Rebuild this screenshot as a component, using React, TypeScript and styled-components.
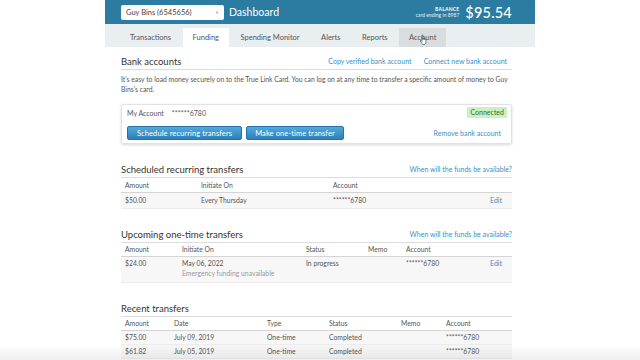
import React from "react";
import styled, { createGlobalStyle } from "styled-components";

const Global = createGlobalStyle`
  html, body { margin: 0; padding: 0; background: #ffffff; }
  body { font-family: Lato, "Open Sans", sans-serif; color: #444; }
  * { box-sizing: border-box; }
`;

const Page = styled.div`
  width: 430px;
  margin: 0 auto;
  background: #fff;
  min-height: 360px;
`;

const Header = styled.header`
  height: 24px;
  background: #2b7ca0;
  display: flex;
  align-items: center;
  padding: 0 23px 0 16px;
`;

const Select = styled.div`
  width: 103px;
  height: 15px;
  background: #fff;
  border-radius: 2px;
  display: flex;
  align-items: center;
  justify-content: space-between;
  padding: 0 5px 0 5px;
  font-size: 7.5px;
  color: #444;
`;

const Caret = styled.span`
  font-size: 4px;
  color: #999;
`;

const Title = styled.h1`
  margin: 0 0 0 5px;
  font-size: 10.5px;
  font-weight: 400;
  color: #fff;
  flex: 1;
`;

const Balance = styled.div`
  display: flex;
  align-items: center;
  gap: 6px;
  color: #fff;
`;

const BalanceLabel = styled.div`
  display: flex;
  flex-direction: column;
  align-items: flex-end;
  line-height: 6px;
`;

const BalanceTitle = styled.span`
  font-size: 5px;
  font-weight: 700;
  letter-spacing: 0.2px;
`;

const BalanceSub = styled.span`
  font-size: 5px;
  opacity: 0.9;
`;

const Amount = styled.span`
  font-size: 14.5px;
  font-weight: 500;
  letter-spacing: 0.2px;
`;

const TabBar = styled.nav`
  height: 23px;
  background: #e9eef1;
  display: flex;
  align-items: flex-end;
  padding-left: 15px;
  position: relative;
`;

const Tab = styled.div<{ $active?: boolean; $hover?: boolean }>`
  height: 19px;
  padding: 0 10px;
  margin-right: 1.5px;
  display: flex;
  align-items: center;
  font-size: 7.5px;
  color: #555;
  background: ${(p) => (p.$active ? "#fff" : p.$hover ? "#d9dddf" : "transparent")};
`;

const Cursor = styled.svg`
  position: absolute;
  left: 314px;
  top: 10px;
`;

const Content = styled.main`
  padding: 0 23px 0 16px;
`;

const SectionHeader = styled.div<{ $mt: number }>`
  margin-top: ${(p) => p.$mt}px;
  display: flex;
  justify-content: space-between;
  align-items: center;
  height: 17px;
  border-bottom: 1px solid #dcdcdc;
`;

const Heading = styled.h2`
  margin: 0;
  font-size: 9.5px;
  font-weight: 400;
  color: #333;
`;

const Links = styled.div`
  display: flex;
  gap: 12px;
  padding-right: 5px;
`;

const Link = styled.a`
  font-size: 7px;
  color: #3a8fc4;
  text-decoration: none;
`;

const Paragraph = styled.p`
  margin: 5px 0 0;
  font-size: 6.8px;
  line-height: 9.5px;
  color: #555;
`;

const Card = styled.div`
  margin-top: 10px;
  height: 40px;
  border: 1px solid #e2e2e2;
  border-radius: 2px;
  box-shadow: 0 1px 3px rgba(0, 0, 0, 0.15);
  padding: 2px 4px 0 5px;
  display: flex;
  flex-direction: column;
  gap: 8px;
`;

const CardRow = styled.div`
  display: flex;
  align-items: center;
  justify-content: space-between;
  font-size: 7px;
  color: #555;
`;

const AccountInfo = styled.div`
  display: flex;
  gap: 8px;
`;

const Badge = styled.span`
  background: #c9f2c3;
  color: #3b6b3b;
  font-size: 7px;
  line-height: 11px;
  padding: 0 3px;
  border-radius: 1px;
`;

const Buttons = styled.div`
  display: flex;
  gap: 4px;
`;

const Button = styled.button<{ $w: number }>`
  width: ${(p) => p.$w}px;
  height: 14px;
  border: 1px solid #2772a8;
  border-radius: 2px;
  background: linear-gradient(#52a9dc, #2c80b9);
  color: #fff;
  font-family: Lato, sans-serif;
  font-size: 7.5px;
  letter-spacing: 0.1px;
  padding: 0;
`;

const RemoveLink = styled(Link)`
  margin-right: 6px;
`;

const Table = styled.div`
  font-size: 6.8px;
  color: #555;
`;

const Row = styled.div<{ $cols: string; $h: number; $head?: boolean; $pad?: number }>`
  display: grid;
  grid-template-columns: ${(p) => p.$cols};
  align-items: ${(p) => (p.$head ? "center" : "start")};
  height: ${(p) => p.$h}px;
  line-height: 9px;
  padding-top: ${(p) => (p.$head ? 0 : p.$pad ?? 2)}px;
  background: ${(p) => (p.$head ? "#fff" : "#f7f7f7")};
  border-bottom: 1px solid ${(p) => (p.$head ? "#d4d4d4" : "#ececec")};
`;

const Cell = styled.div<{ $right?: boolean }>`
  padding: 0 ${(p) => (p.$right ? "10px" : "0")} 0 4px;
  text-align: ${(p) => (p.$right ? "right" : "left")};
  white-space: nowrap;
`;

const SubNote = styled.div`
  color: #9a9a9a;
  margin-top: 1px;
`;

const EditLink = styled(Link)``;

const Fade = styled.div`
  position: fixed;
  left: 0;
  right: 0;
  bottom: 0;
  height: 16px;
  pointer-events: none;
  background: linear-gradient(rgba(0, 0, 0, 0), rgba(0, 0, 0, 0.06));
`;

const schedCols = "76px 132px 1fr 40px";
const upCols = "57px 124px 62px 38px 1fr 40px";
const recentCols = "49px 93px 62px 72px 45px 1fr";

export default function App() {
  return (
    <>
      <Global />
      <Page>
        <Header>
          <Select>
            <span>Guy Bins (6545656)</span>
            <Caret>▼</Caret>
          </Select>
          <Title>Dashboard</Title>
          <Balance>
            <BalanceLabel>
              <BalanceTitle>BALANCE</BalanceTitle>
              <BalanceSub>card ending in 8987</BalanceSub>
            </BalanceLabel>
            <Amount>$95.54</Amount>
          </Balance>
        </Header>
        <TabBar>
          <Tab>Transactions</Tab>
          <Tab $active>Funding</Tab>
          <Tab>Spending Monitor</Tab>
          <Tab>Alerts</Tab>
          <Tab>Reports</Tab>
          <Tab $hover>Account</Tab>
          <Cursor width="10" height="12" viewBox="0 0 10 12">
            <path
              d="M3 1.2c0-.6.9-.6.9 0v4.3l.1-.9c0-.6.9-.6.9 0v.9l.1-.6c0-.6.9-.6.9 0v.8l.1-.4c0-.6.9-.6.9 0v3c0 1.2-.8 2.2-2 2.2H4.6c-.7 0-1.2-.3-1.600-.9L1.4 7.2c-.3-.5.3-1 .8-.6L3 7.5z"
              fill="#fff"
              stroke="#333"
              strokeWidth="0.6"
              strokeLinejoin="round"
            />
          </Cursor>
        </TabBar>
        <Content>
          <SectionHeader $mt={6}>
            <Heading>Bank accounts</Heading>
            <Links>
              <Link>Copy verified bank account</Link>
              <Link>Connect new bank account</Link>
            </Links>
          </SectionHeader>
          <Paragraph>
            It's easy to load money securely on to the True Link Card. You can log on at any time to transfer a specific amount of money to Guy Bins's card.
          </Paragraph>
          <Card>
            <CardRow>
              <AccountInfo>
                <span>My Account</span>
                <span>******6780</span>
              </AccountInfo>
              <Badge>Connected</Badge>
            </CardRow>
            <CardRow>
              <Buttons>
                <Button $w={115}>Schedule recurring transfers</Button>
                <Button $w={98}>Make one-time transfer</Button>
              </Buttons>
              <RemoveLink>Remove bank account</RemoveLink>
            </CardRow>
          </Card>

          <SectionHeader $mt={17}>
            <Heading>Scheduled recurring transfers</Heading>
            <Link>When will the funds be available?</Link>
          </SectionHeader>
          <Table>
            <Row $cols={schedCols} $h={15} $head>
              <Cell>Amount</Cell>
              <Cell>Initiate On</Cell>
              <Cell>Account</Cell>
              <Cell />
            </Row>
            <Row $cols={schedCols} $h={16} $pad={3}>
              <Cell>$50.00</Cell>
              <Cell>Every Thursday</Cell>
              <Cell>******6780</Cell>
              <Cell $right>
                <EditLink>Edit</EditLink>
              </Cell>
            </Row>
          </Table>

          <SectionHeader $mt={17}>
            <Heading>Upcoming one-time transfers</Heading>
            <Link>When will the funds be available?</Link>
          </SectionHeader>
          <Table>
            <Row $cols={upCols} $h={14} $head>
              <Cell>Amount</Cell>
              <Cell>Initiate On</Cell>
              <Cell>Status</Cell>
              <Cell>Memo</Cell>
              <Cell>Account</Cell>
              <Cell />
            </Row>
            <Row $cols={upCols} $h={26} $pad={2}>
              <Cell>$24.00</Cell>
              <Cell>
                May 06, 2022
                <SubNote>Emergency funding unavailable</SubNote>
              </Cell>
              <Cell>In progress</Cell>
              <Cell />
              <Cell>******6780</Cell>
              <Cell $right>
                <EditLink>Edit</EditLink>
              </Cell>
            </Row>
          </Table>

          <SectionHeader $mt={17}>
            <Heading>Recent transfers</Heading>
          </SectionHeader>
          <Table>
            <Row $cols={recentCols} $h={14} $head>
              <Cell>Amount</Cell>
              <Cell>Date</Cell>
              <Cell>Type</Cell>
              <Cell>Status</Cell>
              <Cell>Memo</Cell>
              <Cell>Account</Cell>
            </Row>
            <Row $cols={recentCols} $h={14} $pad={2}>
              <Cell>$75.00</Cell>
              <Cell>July 09, 2019</Cell>
              <Cell>One-time</Cell>
              <Cell>Completed</Cell>
              <Cell />
              <Cell>******6780</Cell>
            </Row>
            <Row $cols={recentCols} $h={14} $pad={2}>
              <Cell>$61.82</Cell>
              <Cell>July 05, 2019</Cell>
              <Cell>One-time</Cell>
              <Cell>Completed</Cell>
              <Cell />
              <Cell>******6780</Cell>
            </Row>
          </Table>
        </Content>
      </Page>
      <Fade />
    </>
  );
}
